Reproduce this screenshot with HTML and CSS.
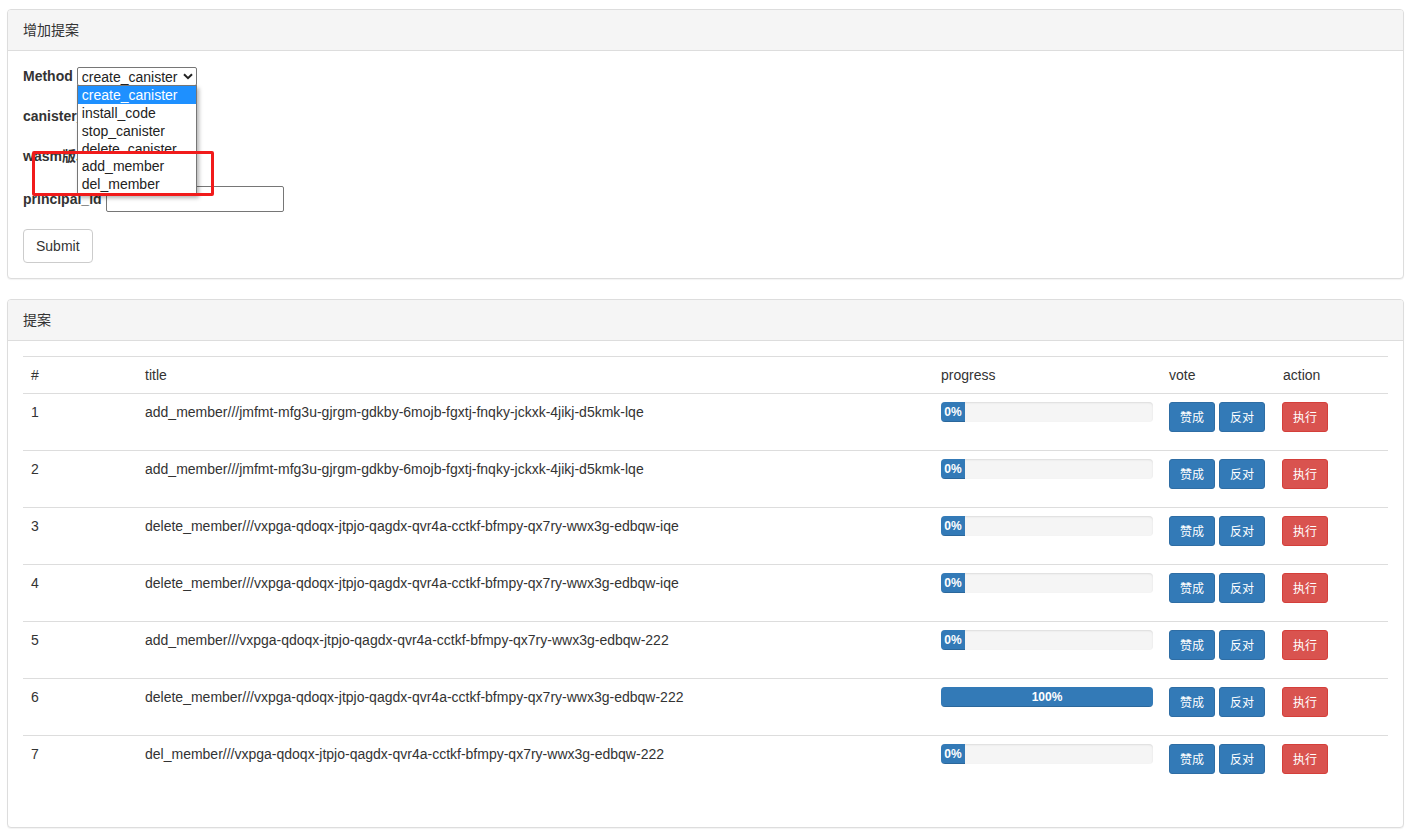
FILE: index.html
```html
<!DOCTYPE html>
<html lang="zh">
<head>
<meta charset="utf-8">
<title>提案</title>
<link rel="stylesheet" href="styles.css">
</head>
<body>
<div class="page">
  <div class="panel panel-form">
    <div class="panel-heading">增加提案</div>
    <div class="panel-body">
      <form class="form">
        <div class="form-group">
          <label class="label">Method</label>
          <span class="select-wrap">
            <span class="select-box">
              <span class="select-text">create_canister</span>
              <svg class="chevron" width="10" height="7" viewBox="0 0 10 7"><path d="M1 1.2 L5 5.2 L9 1.2" fill="none" stroke="#222" stroke-width="2"/></svg>
            </span>
            <span class="dropdown">
              <span class="opt opt-active">create_canister</span>
              <span class="opt">install_code</span>
              <span class="opt">stop_canister</span>
              <span class="opt opt-clipped"><span class="clip">delete_canister</span></span>
              <span class="opt">add_member</span>
              <span class="opt">del_member</span>
            </span>
          </span>
        </div>
        <div class="form-group">
          <label class="label">canister_id</label>
        </div>
        <div class="form-group">
          <label class="label">wasm版本</label>
        </div>
        <div class="form-group form-group-input">
          <label class="label">principal_id</label>
          <input class="text-input" type="text">
        </div>
        <button class="btn btn-default" type="button">Submit</button>
      </form>
    </div>
  </div>

  <div class="panel panel-list">
    <div class="panel-heading">提案</div>
    <div class="panel-body">
      <table class="table">
        <colgroup>
          <col class="c-num"><col class="c-title"><col class="c-progress"><col class="c-vote"><col class="c-action">
        </colgroup>
        <thead>
          <tr><th>#</th><th>title</th><th>progress</th><th>vote</th><th>action</th></tr>
        </thead>
        <tbody>
          <tr>
            <td>1</td>
            <td>add_member///jmfmt-mfg3u-gjrgm-gdkby-6mojb-fgxtj-fnqky-jckxk-4jikj-d5kmk-lqe</td>
            <td><div class="progress"><div class="progress-bar" style="width:0%">0%</div></div></td>
            <td><button class="btn btn-sm btn-primary" type="button">赞成</button> <button class="btn btn-sm btn-primary" type="button">反对</button></td>
            <td><button class="btn btn-sm btn-danger" type="button">执行</button></td>
          </tr>
          <tr>
            <td>2</td>
            <td>add_member///jmfmt-mfg3u-gjrgm-gdkby-6mojb-fgxtj-fnqky-jckxk-4jikj-d5kmk-lqe</td>
            <td><div class="progress"><div class="progress-bar" style="width:0%">0%</div></div></td>
            <td><button class="btn btn-sm btn-primary" type="button">赞成</button> <button class="btn btn-sm btn-primary" type="button">反对</button></td>
            <td><button class="btn btn-sm btn-danger" type="button">执行</button></td>
          </tr>
          <tr>
            <td>3</td>
            <td>delete_member///vxpga-qdoqx-jtpjo-qagdx-qvr4a-cctkf-bfmpy-qx7ry-wwx3g-edbqw-iqe</td>
            <td><div class="progress"><div class="progress-bar" style="width:0%">0%</div></div></td>
            <td><button class="btn btn-sm btn-primary" type="button">赞成</button> <button class="btn btn-sm btn-primary" type="button">反对</button></td>
            <td><button class="btn btn-sm btn-danger" type="button">执行</button></td>
          </tr>
          <tr>
            <td>4</td>
            <td>delete_member///vxpga-qdoqx-jtpjo-qagdx-qvr4a-cctkf-bfmpy-qx7ry-wwx3g-edbqw-iqe</td>
            <td><div class="progress"><div class="progress-bar" style="width:0%">0%</div></div></td>
            <td><button class="btn btn-sm btn-primary" type="button">赞成</button> <button class="btn btn-sm btn-primary" type="button">反对</button></td>
            <td><button class="btn btn-sm btn-danger" type="button">执行</button></td>
          </tr>
          <tr>
            <td>5</td>
            <td>add_member///vxpga-qdoqx-jtpjo-qagdx-qvr4a-cctkf-bfmpy-qx7ry-wwx3g-edbqw-222</td>
            <td><div class="progress"><div class="progress-bar" style="width:0%">0%</div></div></td>
            <td><button class="btn btn-sm btn-primary" type="button">赞成</button> <button class="btn btn-sm btn-primary" type="button">反对</button></td>
            <td><button class="btn btn-sm btn-danger" type="button">执行</button></td>
          </tr>
          <tr>
            <td>6</td>
            <td>delete_member///vxpga-qdoqx-jtpjo-qagdx-qvr4a-cctkf-bfmpy-qx7ry-wwx3g-edbqw-222</td>
            <td><div class="progress"><div class="progress-bar" style="width:100%">100%</div></div></td>
            <td><button class="btn btn-sm btn-primary" type="button">赞成</button> <button class="btn btn-sm btn-primary" type="button">反对</button></td>
            <td><button class="btn btn-sm btn-danger" type="button">执行</button></td>
          </tr>
          <tr>
            <td>7</td>
            <td>del_member///vxpga-qdoqx-jtpjo-qagdx-qvr4a-cctkf-bfmpy-qx7ry-wwx3g-edbqw-222</td>
            <td><div class="progress"><div class="progress-bar" style="width:0%">0%</div></div></td>
            <td><button class="btn btn-sm btn-primary" type="button">赞成</button> <button class="btn btn-sm btn-primary" type="button">反对</button></td>
            <td><button class="btn btn-sm btn-danger" type="button">执行</button></td>
          </tr>
        </tbody>
      </table>
    </div>
  </div>

  <div class="annotation"></div>
</div>
</body>
</html>
```

FILE: styles.css
```css
* { box-sizing: border-box; }

html, body {
  margin: 0;
  padding: 0;
  background: #fff;
}

body {
  font-family: "Liberation Sans", Arial, "Noto Sans CJK SC", sans-serif;
  font-size: 14px;
  line-height: 20px;
  color: #333;
}

.page {
  position: relative;
  padding: 9px 0 0 7px;
  width: 1404px;
}

.panel {
  width: 1397px;
  border: 1px solid #ddd;
  border-radius: 4px;
  background: #fff;
  margin-bottom: 20px;
  box-shadow: 0 1px 1px rgba(0, 0, 0, 0.05);
}

.panel-heading {
  background: #f5f5f5;
  border-bottom: 1px solid #ddd;
  border-radius: 3px 3px 0 0;
  padding: 9px 15px 11px;
  color: #333;
  font-family: "Noto Sans CJK SC", "Liberation Sans", sans-serif;
  font-size: 14px;
  line-height: 20px;
}

.panel-body {
  padding: 15px;
}

/* ---------- form ---------- */
.form {
  display: flex;
  flex-direction: column;
  align-items: flex-start;
  margin: 0;
}

.form-group {
  display: flex;
  align-items: center;
  height: 20px;
  margin-bottom: 20px;
}

.form-group-input {
  height: 26px;
  margin-bottom: 17px;
}

.label {
  font-weight: bold;
  color: #333;
  margin-right: 4px;
  font-family: "Liberation Sans", "Noto Sans CJK SC", sans-serif;
}

.select-wrap {
  position: relative;
  display: inline-block;
  z-index: 5;
}

.select-box {
  display: flex;
  align-items: center;
  justify-content: space-between;
  width: 120px;
  height: 19px;
  border: 1px solid #767676;
  border-radius: 2px;
  padding: 0 3px 0 4px;
  font-family: "Liberation Sans", Arial, sans-serif;
  font-size: 14px;
  color: #222;
  background: #fff;
  margin-top: 1px;
}

.chevron {
  display: block;
  flex: none;
}

.dropdown {
  position: absolute;
  left: 0;
  top: 19px;
  width: 120px;
  height: 110px;
  border: 1px solid #767676;
  background: #fff;
  box-shadow: 2px 3px 4px rgba(0, 0, 0, 0.3);
  display: flex;
  flex-direction: column;
  font-family: "Liberation Sans", Arial, sans-serif;
  font-size: 14px;
  color: #222;
}

.opt {
  display: block;
  height: 18px;
  line-height: 18px;
  padding-left: 4px;
  white-space: nowrap;
  flex: none;
}

.opt-active {
  background: #1e90ff;
  color: #fff;
}

.opt-clipped {
  height: 17px;
}

.clip {
  display: block;
  height: 13px;
  overflow: hidden;
  line-height: 18px;
}

.text-input {
  width: 178px;
  height: 26px;
  border: 1px solid #767676;
  border-radius: 2px;
  padding: 1px 2px;
  font: inherit;
  background: #fff;
}

/* ---------- buttons ---------- */
.btn {
  display: inline-block;
  font-family: "Liberation Sans", "Noto Sans CJK SC", sans-serif;
  font-size: 14px;
  line-height: 20px;
  padding: 6px 12px;
  border: 1px solid transparent;
  border-radius: 4px;
  cursor: pointer;
  vertical-align: top;
  margin: 0;
}

.btn-default {
  background: #fff;
  border-color: #ccc;
  color: #333;
}

.btn-sm {
  font-family: "Noto Sans CJK SC", "Liberation Sans", sans-serif;
  font-size: 12px;
  line-height: 18px;
  padding: 5px 10px;
  border-radius: 3px;
  height: 30px;
}

.btn-primary {
  background: #337ab7;
  border-color: #2e6da4;
  color: #fff;
}

.btn-danger {
  background: #d9534f;
  border-color: #d43f3a;
  color: #fff;
}

/* ---------- table ---------- */
.table {
  width: 1365px;
  border-collapse: collapse;
  border-spacing: 0;
  table-layout: fixed;
  margin-bottom: 20px;
}

.c-num { width: 114px; }
.c-title { width: 796px; }
.c-progress { width: 228px; }
.c-vote { width: 114px; }
.c-action { width: 113px; }

.table th,
.table td {
  padding: 8px;
  text-align: left;
  vertical-align: top;
  font-weight: normal;
  line-height: 20px;
  border-top: 1px solid #ddd;
  white-space: nowrap;
}

.table thead th {
  border-bottom: 1px solid #ddd;
  vertical-align: bottom;
}

.table thead + tbody tr:first-child td {
  border-top: 0;
}

.table td:last-child {
  padding-left: 7px;
}

.progress {
  height: 20px;
  margin-bottom: 20px;
  background: #f5f5f5;
  border-radius: 4px;
  overflow: hidden;
  box-shadow: inset 0 1px 2px rgba(0, 0, 0, 0.1);
}

.progress-bar {
  height: 100%;
  min-width: 2em;
  background: #337ab7;
  color: #fff;
  font-size: 12px;
  font-weight: bold;
  line-height: 20px;
  text-align: center;
  box-shadow: inset 0 -1px 0 rgba(0, 0, 0, 0.15);
}

/* ---------- annotation ---------- */
.annotation {
  position: absolute;
  left: 32px;
  top: 151px;
  width: 182px;
  height: 45px;
  border: 3px solid #f11b1b;
  border-radius: 2px;
  z-index: 10;
  pointer-events: none;
}
```
